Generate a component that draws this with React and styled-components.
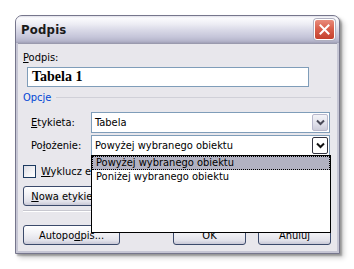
import React from "react";
import styled, { createGlobalStyle } from "styled-components";

const GlobalStyle = createGlobalStyle`
  html, body { margin: 0; padding: 0; background: #ffffff; }
  body {
    font-family: "DejaVu Sans Condensed", "DejaVu Sans", sans-serif;
    font-size: 11px;
    color: #000;
  }
  * { box-sizing: border-box; }
`;

const Page = styled.div`
  width: 354px;
  height: 269px;
  padding: 15px 0 0 15px;
`;

const Window = styled.div`
  width: 325px;
  border: 1px solid #76768c;
  border-radius: 7px 7px 0 0;
  background: #c6c6d4;
  box-shadow: 2px 2px 2px rgba(0, 0, 0, 0.3), 4px 4px 5px rgba(0, 0, 0, 0.18);
  display: flex;
  flex-direction: column;
  overflow: hidden;
`;

const TitleBar = styled.div`
  height: 27px;
  display: flex;
  align-items: center;
  justify-content: space-between;
  padding: 0 4px 0 5px;
  background: linear-gradient(
    to bottom,
    #dedee8 0px,
    #fbfbfd 2px,
    #ededf4 8px,
    #d9d9e7 14px,
    #c5c5d9 21px,
    #b5b5cb 25px,
    #a0a0b6 27px
  );
`;

const Title = styled.span`
  font-family: "DejaVu Sans Condensed", "DejaVu Sans", sans-serif;
  font-weight: bold;
  font-size: 13px;
  color: #1a1a1a;
  letter-spacing: 0.2px;
`;

const CloseButton = styled.div`
  width: 21px;
  height: 21px;
  border-radius: 3px;
  border: 1px solid #ffffff;
  box-shadow: 0 0 0 1px #b0b0c0;
  background: linear-gradient(to bottom, #e98c7c 0%, #d9604d 45%, #c4402d 100%);
  display: flex;
  align-items: center;
  justify-content: center;
`;

const Body = styled.div`
  margin: 0 2px 2px 2px;
  border-top: 1px solid #9a9aae;
  background: #e8e7ec;
  padding: 7px 6px 6px 5px;
  display: flex;
  flex-direction: column;
`;

const Label = styled.span`
  line-height: 13px;
  margin-left: ${(p) => p.$indent || 0}px;
  width: ${(p) => (p.$width ? `${p.$width}px` : "auto")};
  flex-shrink: 0;
  white-space: nowrap;
`;

const U = styled.span`
  text-decoration: underline;
`;

const TextInput = styled.div`
  margin: 3px 0 0 4px;
  width: 282px;
  height: 20px;
  border: 1px solid #7f9db9;
  background: #ffffff;
  padding-left: 4px;
  display: flex;
  align-items: center;
  font-family: "Liberation Serif", serif;
  font-weight: bold;
  font-size: 14px;
`;

const GroupHeader = styled.div`
  margin-top: 4px;
  display: flex;
  align-items: center;
  height: 13px;
  color: #0046d5;
  &::after {
    content: "";
    flex: 1;
    height: 1px;
    margin-left: 5px;
    background: #d0d0d8;
  }
`;

const FieldRow = styled.div`
  margin-top: ${(p) => p.$top}px;
  display: flex;
  align-items: center;
  height: 21px;
`;

const Combo = styled.div`
  position: relative;
  width: 239px;
  height: 21px;
  border: 1px solid #7f9db9;
  background: #ffffff;
  display: flex;
  align-items: center;
  padding: 1px 1px 1px 3px;
`;

const ComboText = styled.span`
  flex: 1;
  white-space: nowrap;
`;

const DropButton = styled.div`
  width: 16px;
  height: 17px;
  border-radius: 2px;
  display: flex;
  align-items: center;
  justify-content: center;
  border: 1px solid ${(p) => (p.$pressed ? "#333340" : "#b8b8cc")};
  background: ${(p) =>
    p.$pressed
      ? "#ffffff"
      : "linear-gradient(to bottom, #f4f4f8 0%, #e0e0ea 60%, #cdcdda 100%)"};
`;

const DropList = styled.div`
  position: absolute;
  z-index: 5;
  top: 100%;
  left: -1px;
  width: 240px;
  height: 78px;
  background: #ffffff;
  border: 1px solid #000000;
  display: flex;
  flex-direction: column;
`;

const ListItem = styled.div`
  height: 14px;
  font-size: 11px;
  line-height: 12px;
  padding-left: 3px;
  white-space: nowrap;
  border: 1px ${(p) => (p.$selected ? "dotted #000" : "solid transparent")};
  background: ${(p) => (p.$selected ? "#b2b2c2" : "transparent")};
`;

const CheckRow = styled.div`
  margin-top: 9px;
  display: flex;
  align-items: center;
  gap: 5px;
  height: 13px;
`;

const CheckBox = styled.div`
  width: 13px;
  height: 13px;
  flex-shrink: 0;
  border: 1px solid #1c3a60;
  background: linear-gradient(135deg, #dcdce4 0%, #f4f4f6 60%, #ffffff 100%);
`;

const Button = styled.div`
  width: ${(p) => p.$width}px;
  height: 20px;
  border: 1px solid #3b4a6b;
  border-radius: 3px;
  background: linear-gradient(to bottom, #ffffff 0%, #f2f2f6 40%, #e2e2ea 80%, #c8c8d6 100%);
  display: flex;
  align-items: center;
  justify-content: center;
  white-space: nowrap;
  flex-shrink: 0;
`;

const ButtonSlot = styled.div`
  margin-top: 8px;
  display: flex;
`;

const Separator = styled.div`
  margin-top: 4px;
  height: 2px;
  border-top: 1px solid #c8c8d0;
  border-bottom: 1px solid #ffffff;
`;

const ButtonRow = styled.div`
  margin-top: 13px;
  display: flex;
  align-items: center;
  gap: 12px;
`;

const Spacer = styled.div`
  flex: 1;
`;

const Chevron = ({ color }) => (
  <svg width="9" height="7" viewBox="0 0 9 7">
    <path d="M1 1.5 L4.5 5 L8 1.5" fill="none" stroke={color} strokeWidth="2" />
  </svg>
);

const CloseX = () => (
  <svg width="11" height="11" viewBox="0 0 11 11">
    <path d="M1.5 1.5 L9.5 9.5 M9.5 1.5 L1.5 9.5" stroke="#ffffff" strokeWidth="2" strokeLinecap="square" />
  </svg>
);

export default function App() {
  return (
    <>
      <GlobalStyle />
      <Page>
        <Window>
          <TitleBar>
            <Title>Podpis</Title>
            <CloseButton>
              <CloseX />
            </CloseButton>
          </TitleBar>
          <Body>
            <Label>
              <U>P</U>odpis:
            </Label>
            <TextInput>Tabela 1</TextInput>
            <GroupHeader>Opcje</GroupHeader>
            <FieldRow $top={8}>
              <Label $indent={8} $width={60}>
                <U>E</U>tykieta:
              </Label>
              <Combo>
                <ComboText>Tabela</ComboText>
                <DropButton>
                  <Chevron color="#4a4a58" />
                </DropButton>
              </Combo>
            </FieldRow>
            <FieldRow $top={2}>
              <Label $indent={8} $width={60}>
                Po<U>ł</U>ożenie:
              </Label>
              <Combo>
                <ComboText>Powyżej wybranego obiektu</ComboText>
                <DropButton $pressed>
                  <Chevron color="#111111" />
                </DropButton>
                <DropList>
                  <ListItem $selected>Powyżej wybranego obiektu</ListItem>
                  <ListItem>Poniżej wybranego obiektu</ListItem>
                </DropList>
              </Combo>
            </FieldRow>
            <CheckRow>
              <CheckBox />
              <Label>
                <U>W</U>yklucz etykietę z podpisu
              </Label>
            </CheckRow>
            <ButtonSlot>
              <Button $width={97}>
                <U>N</U>owa etykieta...
              </Button>
            </ButtonSlot>
            <Separator />
            <ButtonRow>
              <Button $width={97}>
                Autopo<U>d</U>pis...
              </Button>
              <Spacer />
              <Button $width={73}>OK</Button>
              <Button $width={73}>Anuluj</Button>
            </ButtonRow>
          </Body>
        </Window>
      </Page>
    </>
  );
}
